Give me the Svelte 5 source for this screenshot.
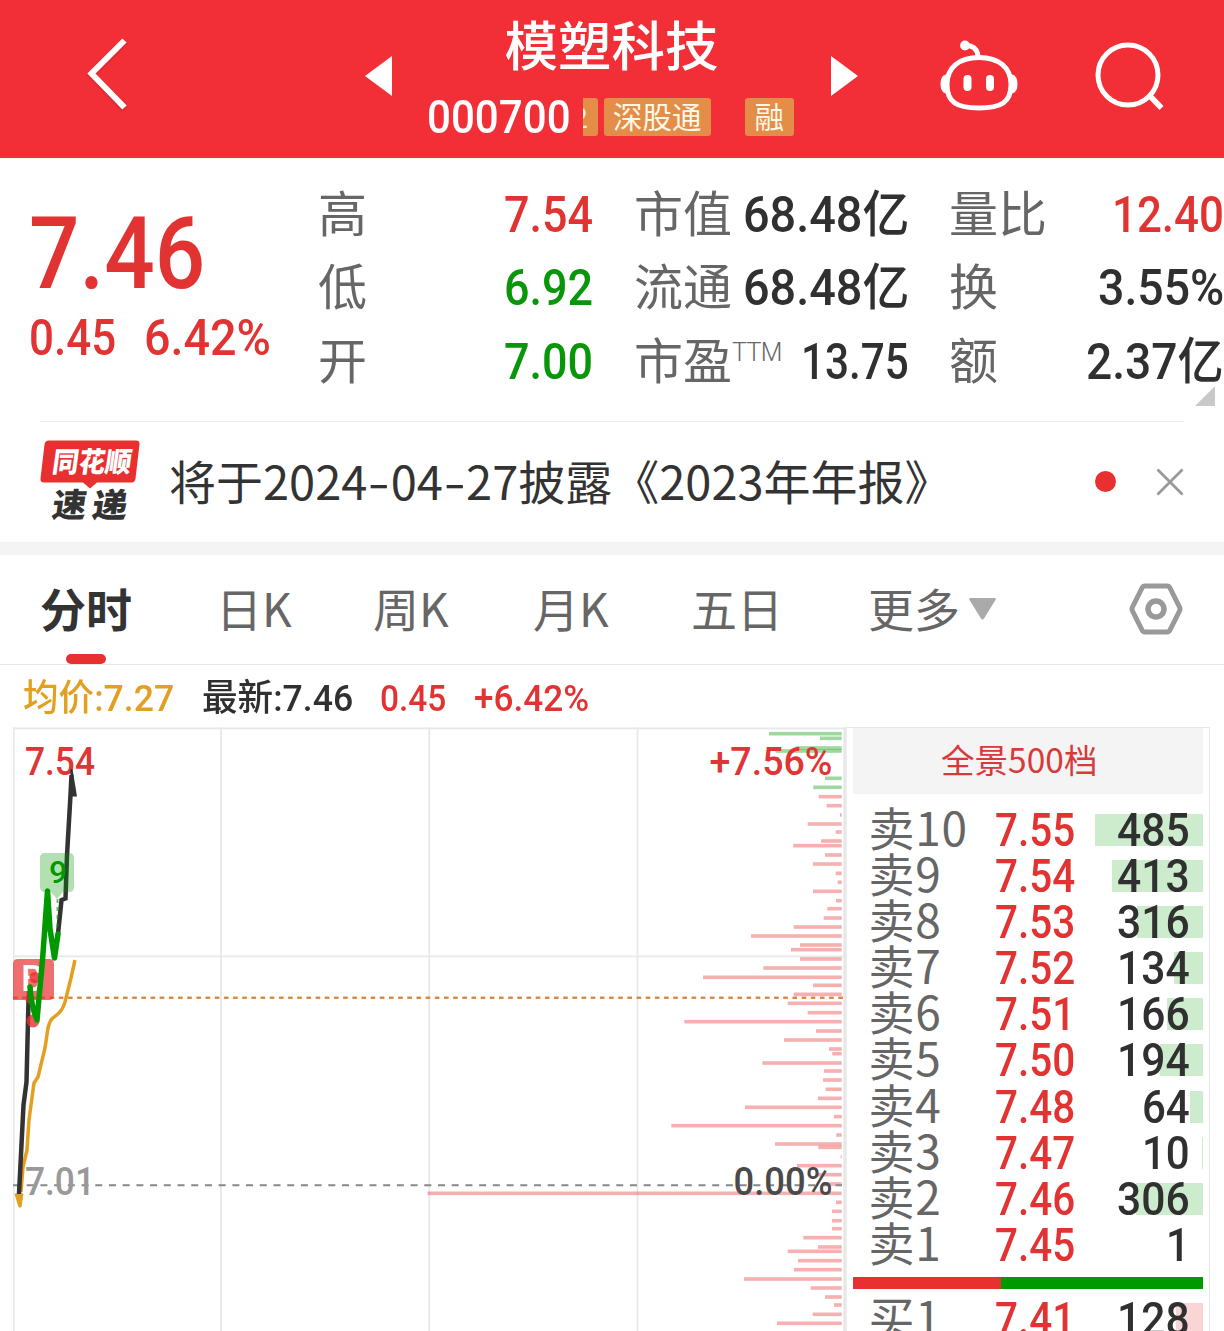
<script lang="ts">
	type Tone = 'up' | 'down' | 'flat';
	type Stat = { label: string; sup?: string; value: string; width: number; tone: Tone };

	const stats: Stat[][] = [
		[
			{ label: '高', value: '7.54', width: 89, tone: 'up' },
			{ label: '低', value: '6.92', width: 89, tone: 'down' },
			{ label: '开', value: '7.00', width: 89, tone: 'down' }
		],
		[
			{ label: '市值', value: '68.48亿', width: 166, tone: 'flat' },
			{ label: '流通', value: '68.48亿', width: 166, tone: 'flat' },
			{ label: '市盈', sup: 'TTM', value: '13.75', width: 108, tone: 'flat' }
		],
		[
			{ label: '量比', value: '12.40', width: 112, tone: 'up' },
			{ label: '换', value: '3.55%', width: 126, tone: 'flat' },
			{ label: '额', value: '2.37亿', width: 138, tone: 'flat' }
		]
	];

	const tabs = [
		{ name: '分时', width: 176 },
		{ name: '日K', width: 157 },
		{ name: '周K', width: 160 },
		{ name: '月K', width: 158 },
		{ name: '五日', width: 177 }
	];

	// [level, price, volume, volume text width, depth bar width]
	const asks: [string, string, string, number, number][] = [
		['卖10', '7.55', '485', 73, 108],
		['卖9', '7.54', '413', 73, 91],
		['卖8', '7.53', '316', 73, 66],
		['卖7', '7.52', '134', 73, 29],
		['卖6', '7.51', '166', 73, 36],
		['卖5', '7.50', '194', 73, 43],
		['卖4', '7.48', '64', 48, 13],
		['卖3', '7.47', '10', 48, 1],
		['卖2', '7.46', '306', 73, 67],
		['卖1', '7.45', '1', 24, 0]
	];

	const BAR_RIGHT = 828.7;

	// chips by price level, [y, length]
	const greenBars = [
		[6.7, 72.7], [11.3, 21.7], [21, 45.7], [24, 66], [51.3, 16.7], [60.3, 28.4]
	];
	const redBars = [
		[69.7, 23], [78.7, 15], [88, 1.7], [97, 34], [105, 6], [114, 20.7], [118.7, 48.4], [128, 16.7],
		[137, 28.7], [146.3, 6], [155.3, 4], [164.3, 28.7], [173.7, 5.7], [181.7, 14.4], [191, 18],
		[200, 48], [209, 90.7], [218, 41.7], [222.7, 50.7], [232, 41.7], [241, 78.4], [250.3, 138.7],
		[258.3, 28.7], [267.3, 48], [276.3, 54], [285.7, 34], [294.7, 157.4], [304, 25.7], [313, 57.7],
		[322, 12.7], [326.7, 9.4], [336, 79.4], [344, 17.7], [353, 18.7], [362.3, 16], [371.3, 23.7],
		[380.3, 96.7], [389.7, 7.7], [398.7, 170.4], [408, 5.4], [417, 66.7], [420.3, 23.4],
		[429.7, 1], [438.7, 44.7], [447.7, 26], [457, 19.7], [466.3, 414], [475.3, 5.7], [484.3, 9.7],
		[493.7, 9.7], [501.7, 9.7], [510.7, 38.4], [520, 23.7], [524.3, 54], [533.7, 43.7],
		[542.7, 47.7], [552, 97.7], [561, 31], [570, 16.7], [578, 7.7], [587.3, 29], [596.3, 64.7]
	];

	function squeeze(node: HTMLElement, width: number) {
		node.style.transform = `scaleX(${width / node.offsetWidth})`;
	}
</script>

{#snippet num(text: string, width: number)}
	<span class="num" style:width="{width}px"><span class="run" use:squeeze={width}>{text}</span></span>
{/snippet}

<div class="page">
	<header>
		<svg class="back" width="50" height="80" viewBox="0 0 50 80">
			<path d="M39.5 5.5 6.5 38.5l33 34" fill="none" stroke="#fff" stroke-width="6" />
		</svg>
		<svg class="step" width="27" height="40" viewBox="0 0 27 40"><path d="M0 20 27 0v40z" fill="#fff" /></svg>
		<div class="stock">
			<h1>模塑科技</h1>
			<div class="code">
				<span class="digits">{@render num('000700', 144)}</span>
				<span class="tag cut"><span>2</span></span>
				<span class="tag">深股通</span>
				<span class="tag margin">融</span>
			</div>
		</div>
		<svg class="step" width="27" height="40" viewBox="0 0 27 40"><path d="M27 20 0 0v40z" fill="#fff" /></svg>
		<div class="actions">
			<svg width="82" height="76" viewBox="0 0 82 76" fill="none" stroke="#fff" stroke-width="5">
				<path d="M27 9.500c7-.5 12.500 3 13 11" />
				<circle cx="27" cy="9.500" r="4.900" fill="#fff" stroke="none" />
				<path d="M41 21.500c20 0 32 10 32 27 0 18-10 23.500-32 23.500s-32-5.500-32-23.500c0-17 12-27 32-27z" />
				<path d="M8 39.500C2 41 2 55 8 56.500zM74 39.500c6 1.500 6 15.500 0 17z" fill="#fff" stroke-width="2" />
				<rect x="25.500" y="39" width="8" height="16" rx="4" fill="#fff" stroke="none" />
				<rect x="48" y="39" width="8" height="16" rx="4" fill="#fff" stroke="none" />
			</svg>
			<svg width="74" height="76" viewBox="0 0 74 76" fill="none" stroke="#fff" stroke-width="5">
				<circle cx="35" cy="39" r="30" />
				<path d="m57 60 11.500 12" stroke-width="5.500" />
			</svg>
		</div>
	</header>

	<section class="quote">
		<div class="last up">
			<div class="price">{@render num('7.46', 176)}</div>
			<div class="change">{@render num('0.45', 87)}{@render num('6.42%', 127)}</div>
		</div>
		{#each stats as column}
			<dl>
				{#each column as s}
					<div class="stat">
						<dt>{s.label}{#if s.sup}<span class="sup">{s.sup}</span>{/if}</dt>
						<dd class={s.tone}>{@render num(s.value, s.width)}</dd>
					</div>
				{/each}
			</dl>
		{/each}
		<svg class="corner" width="20" height="20" viewBox="0 0 20 20"><path d="M20 0v20H0z" fill="#c9c9c9" /></svg>
	</section>

	<section class="news">
		<svg width="102" height="86" viewBox="0 0 102 86">
			<path d="M9 1.500h87q4 0 3.500 4l-4 34q-.500 4-4 4H57l-7 6-7-6H4q-4 0-3.500-4l4-34Q5 1.500 9 1.500z" fill="#e83030" />
			<g font-weight="900" transform="skewX(-8)">
				<text x="16" y="33" font-size="28" fill="#fff" textLength="79" lengthAdjust="spacingAndGlyphs">同花顺</text>
				<text x="22" y="78" font-size="33" fill="#333" textLength="34" lengthAdjust="spacingAndGlyphs">速</text>
				<text x="62" y="78" font-size="33" fill="#333" textLength="35" lengthAdjust="spacingAndGlyphs">递</text>
			</g>
		</svg>
		<p>将于2024<i>-</i>04<i>-</i>27披露《2023年年报》</p>
		<span class="dot"></span>
		<svg class="close" width="28" height="28" viewBox="0 0 28 28">
			<path d="m1.500 1.500 25 25m0-25-25 25" stroke="#999" stroke-width="2.800" />
		</svg>
	</section>

	<nav>
		{#each tabs as tab, i}
			<span class="tab" class:active={i === 0} style:width="{tab.width}px">{tab.name}</span>
		{/each}
		<span class="more">更多</span>
		<svg class="caret" width="27" height="22" viewBox="0 0 27 22"><path d="M1.500 0h24q2 0 1 2L15 20.500q-1.500 2-3 0L.5 2q-1-2 1-2z" fill="#aaa" /></svg>
		<svg class="settings" width="54" height="52" viewBox="0 0 54 52" fill="none" stroke="#999">
			<path d="M16 3h22q2 0 3 2l9.500 19q1 2 0 4L41 47q-1 2-3 2H16q-2 0-3-2L3.500 28q-1-2 0-4L13 5q1-2 3-2z" stroke-width="5" />
			<circle cx="27" cy="26" r="8" stroke-width="5.500" />
		</svg>
	</nav>

	<div class="legend">
		<span class="avg">{@render num('均价:7.27', 151)}</span>
		<span class="flat">{@render num('最新:7.46', 151)}</span>
		<span class="up">{@render num('0.45', 66)}</span>
		<span class="up">{@render num('+6.42%', 115)}</span>
	</div>

	<main>
		<svg class="chart" width="834" height="604" viewBox="0 0 834 604">
			<g stroke="#e8e8e8" stroke-width="1.800" fill="none">
				<path d="M0 1.300h834M.8 0v604M208 0v604M416.300 0v604M624.500 0v604M0 229.300h834" />
				<path d="M832 0v604" stroke-width="3.500" />
			</g>

			{#each greenBars as [y, length]}
				<rect x={BAR_RIGHT - length} y={y - 1.8} width={length} height="3.600" fill="#009900" fill-opacity="0.38" />
			{/each}
			{#each redBars as [y, length]}
				<rect x={BAR_RIGHT - length} y={y - 1.8} width={length} height="3.600" fill="#e83030" fill-opacity="0.38" />
			{/each}

			<path d="M0 270.700h834" stroke="#d98b45" stroke-width="2.400" stroke-dasharray="4.600 4.570" />
			<path d="M0 458.300h829" stroke="#888" stroke-width="2" stroke-dasharray="7 6.710" />

			<g class="axis">
				<text x="12" y="48" fill="#e03535" textLength="70" lengthAdjust="spacingAndGlyphs">7.54</text>
				<text x="696.500" y="48" fill="#e03535" textLength="123" lengthAdjust="spacingAndGlyphs">+7.56%</text>
				<text x="12" y="468" fill="#999" textLength="70" lengthAdjust="spacingAndGlyphs">7.01</text>
				<text x="720.500" y="468" fill="#4a4a4a" textLength="99" lengthAdjust="spacingAndGlyphs">0.00%</text>
			</g>

			<path d="M2 467h8l-2 13h-2z" fill="#e3a020" stroke="#e3a020" />
			<path
				d="M8 465 10 440l4-17 2-30 5-37 4-6 7-29 3-20q2-8 5-10l6-5q5-5 7-15l5-20 4-18"
				fill="none" stroke="#e3a020" stroke-width="3.500" stroke-linejoin="round"
			/>
			<path d="M6 467 10.500 378l3-23L15.500 273l1-14" fill="none" stroke="#333" stroke-width="4.500" />
			<path d="M45 207l3.500-34 4-1.500L54 128l3.500-60 1-20" fill="none" stroke="#333" stroke-width="4.500" />
			<path d="M57.500 42h2L64 69.500h-7z" fill="#333" />
			<path d="M44.500 172v32" stroke="#009900" stroke-opacity="0.6" stroke-width="2" stroke-dasharray="4 4" />

			<path d="M5 232h31q5 0 5 5v31q0 5-5 5H21l-5 4-4-4H0v-36q0-5 5-5z" fill="#e83030" fill-opacity="0.7" />
			<text class="mark" x="8" y="264" font-size="36" fill="#fff">B</text>
			<circle cx="22" cy="250.500" r="5.500" fill="#e83030" fill-opacity="0.85" />
			<circle cx="20" cy="294" r="6.500" fill="#e83030" fill-opacity="0.8" />
			<path
				d="M17 260q1 18 7 33L29.500 233 34.500 164 37 202l4.500 29L45 207"
				fill="none" stroke="#009900" stroke-width="5.500" stroke-linejoin="round" stroke-linecap="round"
			/>
			<path d="M32 126h24q5 0 5 5v29q0 5-5 5h-6l-6 7-6-7h-6q-5 0-5-5v-29q0-5 5-5z" fill="#009900" fill-opacity="0.3" />
			<text class="mark" x="36" y="156" font-size="32" fill="#009900">9</text>
		</svg>

		<aside>
			<div class="depth">全景500档</div>
			<div class="book">
				{#each asks as [level, price, volume, width, bar]}
					<div class="row">
						<span class="bar" style:width="{bar}px"></span>
						<span class="level">{level}</span>
						<span class="quoted up">{@render num(price, 80)}</span>
						<span class="volume">{@render num(volume, width)}</span>
					</div>
				{/each}
			</div>
			<div class="ratio"><span></span></div>
			<div class="row">
				<span class="bar buy" style:width="27px"></span>
				<span class="level">买1</span>
				<span class="quoted up">{@render num('7.41', 80)}</span>
				<span class="volume">{@render num('128', 73)}</span>
			</div>
		</aside>
	</main>
</div>

<style>
	:global(body) {
		margin: 0;
		background: #fff;
	}
	.page {
		width: 1224px;
		height: 1331px;
		overflow: hidden;
		color: #333;
		font-family: 'Noto Sans CJK SC', sans-serif;
	}
	h1,
	p,
	dl,
	dd {
		margin: 0;
	}
	svg {
		display: block;
		flex: none;
	}
	.up {
		color: #e23333;
	}
	.down {
		color: #0a960a;
	}
	.flat {
		color: #303030;
	}
	.num {
		display: inline-block;
		font-family: Roboto, 'Noto Sans CJK SC', sans-serif;
		font-weight: 500;
		white-space: nowrap;
	}
	.run {
		display: inline-block;
		transform-origin: left;
	}

	header {
		display: grid;
		grid-template-columns: 365px 27px 439px 27px 1fr;
		height: 157.5px;
		background: #f22f37;
		color: #fff;
	}
	.back {
		margin: 35px 0 0 85px;
		filter: drop-shadow(0 1px 1px rgba(120, 0, 0, 0.35));
	}
	.step {
		margin-top: 56px;
	}
	h1 {
		padding-top: 1px;
		font-size: 53.5px;
		font-weight: 500;
		line-height: 83px;
		text-align: center;
	}
	.code {
		display: flex;
		align-items: center;
		height: 66px;
		padding-left: 35px;
	}
	.digits {
		display: flex;
		width: 156px;
		font-size: 46.5px;
		line-height: 67px;
	}
	.tag {
		height: 38px;
		padding: 0 9.5px;
		border-radius: 3px;
		background: #e38d49;
		color: #fff8e6;
		font-size: 29.5px;
		line-height: 35px;
	}
	.cut {
		display: flex;
		justify-content: flex-end;
		width: 5px;
		margin-right: 6px;
		padding-left: 0;
		border-radius: 0 3px 3px 0;
		overflow: hidden;
	}
	.margin {
		margin-left: 34px;
	}
	.actions {
		display: flex;
		gap: 73px;
		padding: 36px 0 0 80px;
	}

	.quote {
		position: relative;
		display: flex;
		height: 263px;
	}
	.last {
		width: 289px;
		padding: 47.5px 0 0 29px;
	}
	.price {
		display: flex;
		font-size: 100px;
		line-height: 98px;
	}
	.change {
		display: flex;
		gap: 28px;
		font-size: 50px;
		line-height: 70px;
	}
	dl {
		flex: none;
		width: 275px;
		margin-right: 41px;
		padding-top: 15px;
	}
	dl:nth-of-type(2) {
		margin-right: 40px;
	}
	dl:nth-of-type(3) {
		margin-right: 0;
	}
	.stat {
		display: flex;
		align-items: baseline;
		justify-content: space-between;
		height: 73.8px;
		font-size: 50.5px;
		line-height: 74px;
	}
	dt {
		color: #666;
		font-size: 49px;
		white-space: nowrap;
	}
	.sup {
		display: inline-block;
		font-family: Roboto, sans-serif;
		font-size: 25px;
		font-weight: 300;
		letter-spacing: -0.7px;
		line-height: 25px;
		vertical-align: 18px;
	}
	.corner {
		position: absolute;
		right: 9px;
		bottom: 15px;
	}

	.news {
		display: flex;
		align-items: center;
		height: 120px;
		margin: 0 40px;
		border-top: 1.5px solid #ececec;
	}
	.news p {
		flex: none;
		width: 953px;
		padding: 0 0 3px 27px;
		box-sizing: border-box;
		font-size: 47px;
		line-height: 100px;
		white-space: nowrap;
	}
	.news i {
		display: inline-block;
		width: 23.3px;
		font-style: normal;
		text-align: center;
		transform: scaleX(1.35);
	}
	.dot {
		flex: none;
		width: 21px;
		height: 21px;
		border-radius: 50%;
		background: #e83030;
	}
	.close {
		margin-left: auto;
	}

	nav {
		display: flex;
		align-items: center;
		height: 109px;
		padding-left: 40px;
		border-top: 13.5px solid #f4f4f4;
		border-bottom: 1.5px solid #e8e8e8;
		color: #666;
		font-size: 46px;
		line-height: 104px;
	}
	.tab,
	.more {
		position: relative;
		flex: none;
		padding-bottom: 5px;
	}
	.active {
		color: #333;
		font-weight: 700;
	}
	.active::after {
		content: '';
		position: absolute;
		left: 26px;
		bottom: 0;
		width: 40px;
		height: 10px;
		border-radius: 5px;
		background: #e83030;
	}
	.more {
		width: 100px;
	}
	.caret {
		margin-left: 1px;
	}
	.settings {
		margin-left: 133px;
	}

	.legend {
		display: flex;
		gap: 27.5px;
		height: 62px;
		padding-left: 23px;
		font-size: 37px;
		line-height: 68px;
	}
	.legend > span {
		display: flex;
	}
	.avg {
		color: #e3a020;
	}

	main {
		display: flex;
	}
	.chart {
		margin-left: 13px;
	}
	.axis {
		font-family: Roboto, sans-serif;
		font-size: 38.5px;
		font-weight: 500;
	}
	.mark {
		font-family: Roboto, sans-serif;
		font-weight: 500;
	}
	aside {
		width: 350.5px;
		height: 604px;
		padding: 0 6px 0 5.5px;
		border-top: 1px solid #e8e8e8;
		border-right: 1px solid #e8e8e8;
	}
	.depth {
		height: 66px;
		margin-bottom: 9px;
		background: #f4f4f4;
		color: #d83a3a;
		font-size: 33.5px;
		line-height: 62px;
		text-align: center;
		text-indent: -17px;
	}
	.row {
		position: relative;
		display: flex;
		align-items: baseline;
		height: 46.2px;
		line-height: 46.2px;
		font-size: 45.5px;
	}
	.level {
		position: relative;
		width: 142px;
		padding-left: 16px;
		box-sizing: border-box;
		color: #666;
		font-size: 46px;
		letter-spacing: 0.7px;
	}
	.quoted,
	.volume {
		position: relative;
	}
	.volume {
		margin-left: auto;
		padding-right: 13px;
		color: #303030;
	}
	.bar {
		position: absolute;
		top: 11px;
		right: 0;
		height: 32px;
		background: #cdebcd;
	}
	.buy {
		background: #f9d5d5;
	}
	.ratio {
		height: 11.5px;
		margin: 13px 0 3px;
		background: #009900;
	}
	.ratio span {
		display: block;
		width: 148px;
		height: 100%;
		background: #e83030;
	}
</style>
